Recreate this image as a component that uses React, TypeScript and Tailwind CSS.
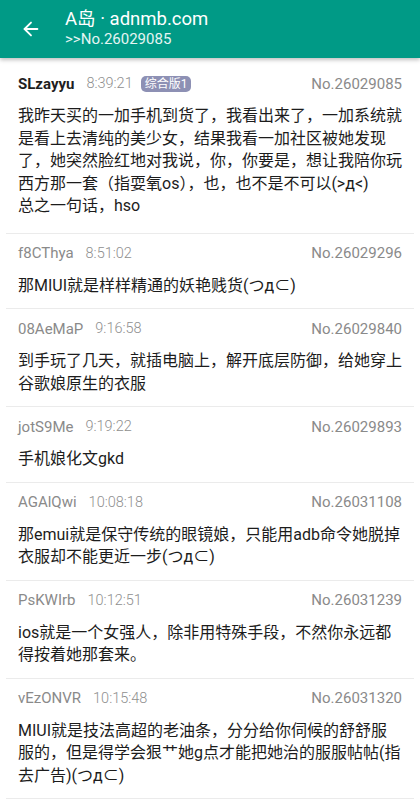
import { ArrowLeft } from "lucide-react"

type Post = {
  user: string
  time: string
  no: string
  body: string
  op?: boolean
}

const posts: Post[] = [
  {
    user: "SLzayyu",
    time: "8:39:21",
    no: "No.26029085",
    op: true,
    body: "我昨天买的一加手机到货了，我看出来了，一加系统就是看上去清纯的美少女，结果我看一加社区被她发现了，她突然脸红地对我说，你，你要是，想让我陪你玩西方那一套（指耍氧os），也，也不是不可以(>д<)\n总之一句话，hso",
  },
  { user: "f8CThya", time: "8:51:02", no: "No.26029296", body: "那MIUI就是样样精通的妖艳贱货(つд⊂)" },
  { user: "08AeMaP", time: "9:16:58", no: "No.26029840", body: "到手玩了几天，就插电脑上，解开底层防御，给她穿上谷歌娘原生的衣服" },
  { user: "jotS9Me", time: "9:19:22", no: "No.26029893", body: "手机娘化文gkd" },
  { user: "AGAlQwi", time: "10:08:18", no: "No.26031108", body: "那emui就是保守传统的眼镜娘，只能用adb命令她脱掉衣服却不能更近一步(つд⊂)" },
  { user: "PsKWIrb", time: "10:12:51", no: "No.26031239", body: "ios就是一个女强人，除非用特殊手段，不然你永远都得按着她那套来。" },
  {
    user: "vEzONVR",
    time: "10:15:48",
    no: "No.26031320",
    body: "MIUI就是技法高超的老油条，分分给你伺候的舒舒服服的，但是得学会狠艹她g点才能把她治的服服帖帖(指去广告)(つд⊂)",
  },
]

function PostItem({ post }: { post: Post }) {
  return (
    <div className={post.op ? "pt-4 pb-[15px] px-[18px]" : "pt-2.5 pb-[11px] px-[18px]"}>
      <div className="flex items-center h-5 text-[15px]">
        <span className={post.op ? "font-bold text-[#1f1f1f]" : "text-[#8a8a8a]"}>{post.user}</span>
        <span className="ml-3 text-[14.5px] text-[#8f8f8f] font-light">{post.time}</span>
        {post.op && (
          <span className="ml-2 rounded-[5px] bg-[#8d90b4] px-1 h-[16px] leading-[16px] text-[12px] text-white">
            综合版1
          </span>
        )}
        <span className="ml-auto text-[#8a8a8a]">{post.no}</span>
      </div>
      <p className="mt-[11px] text-[16px] leading-[22.5px] text-[#1c1c1c] whitespace-pre-line">{post.body}</p>
    </div>
  )
}

export default function App() {
  return (
    <div
      className="w-[420px] h-[800px] overflow-hidden bg-white flex flex-col"
      style={{ fontFamily: 'Roboto, "Noto Sans CJK SC", sans-serif' }}
    >
      <header className="h-[58px] bg-[#009a86] text-white flex items-center shadow-[0_2px_4px_rgba(0,0,0,0.25)] relative z-10 shrink-0">
        <div className="w-[65px] flex justify-center pr-1">
          <ArrowLeft size={22} strokeWidth={2} />
        </div>
        <div className="flex flex-col pb-0.5">
          <span className="text-[18.5px] leading-[22px]">A岛 · adnmb.com</span>
          <span className="text-[15px] leading-[18px] text-white/90">&gt;&gt;No.26029085</span>
        </div>
      </header>
      <main className="flex-grow">
        {posts.map((p) => (
          <div key={p.no}>
            <PostItem post={p} />
            <div className="mx-1.5 h-px bg-[#ebebeb]" />
          </div>
        ))}
      </main>
    </div>
  )
}
